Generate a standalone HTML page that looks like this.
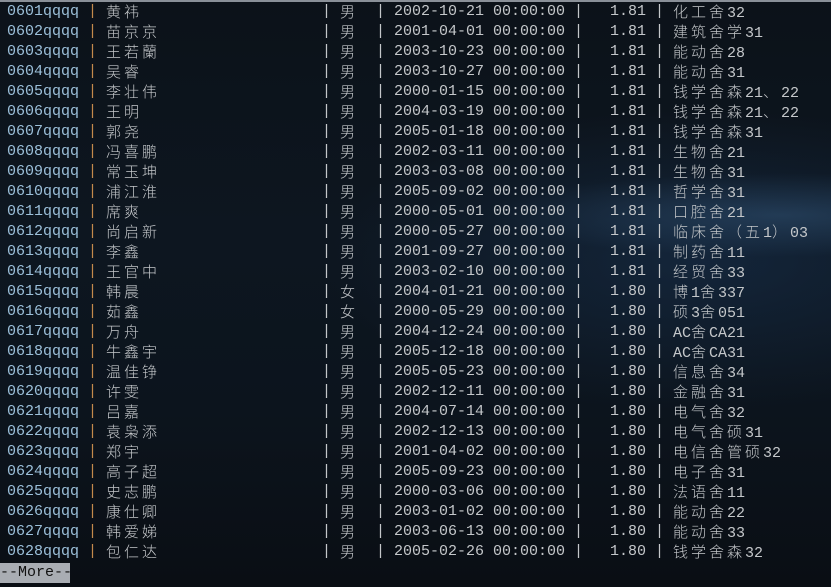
<!DOCTYPE html>
<html><head><meta charset="utf-8"><style>
html,body{margin:0;padding:0}
body{width:831px;height:587px;overflow:hidden;position:relative;
background:
radial-gradient(ellipse 420px 60px at 780px 215px,rgba(60,100,140,.4),rgba(0,0,0,0) 70%),
radial-gradient(ellipse 500px 200px at 700px 260px,rgba(25,50,80,.55),rgba(0,0,0,0) 75%),
linear-gradient(180deg,#0c1219 0%,#0d1620 40%,#0c141d 70%,#0a0e14 100%);
font-family:"Liberation Mono","Noto Sans CJK SC",monospace;font-size:15px;color:#c4c7ca}
.top{position:absolute;left:0;top:0;width:831px;height:2px;background:#8a9098}
.r{position:absolute;left:0;height:20px;line-height:20px;width:831px;white-space:pre}
.r span{position:absolute;top:0}
.id{left:7px;color:#9cc0da}
.s1{left:88px;color:#c48a4c}
.nm{left:106px}
.s2{left:322px}.sx{left:340px}.s3{left:376px}.dt{left:394px}.s4{left:574px}.ht{left:610px}.s5{left:655px}.dm{left:673px}
i{font-style:normal;letter-spacing:3px;font-family:"Noto Sans CJK SC",sans-serif;font-weight:300}
.more{position:absolute;left:0;top:563px;width:70px;height:20px;line-height:20px;background:#a9adb3;color:#111;white-space:pre}
</style></head><body>
<div class="top"></div>
<div class="r" style="top:2px"><span class="id">0601qqqq</span><span class="s1">|</span><span class="nm"><i>黄祎</i></span><span class="s2">|</span><span class="sx"><i>男</i></span><span class="s3">|</span><span class="dt">2002-10-21 00:00:00</span><span class="s4">|</span><span class="ht">1.81</span><span class="s5">|</span><span class="dm"><i>化工舍</i>32</span></div>
<div class="r" style="top:22px"><span class="id">0602qqqq</span><span class="s1">|</span><span class="nm"><i>苗京京</i></span><span class="s2">|</span><span class="sx"><i>男</i></span><span class="s3">|</span><span class="dt">2001-04-01 00:00:00</span><span class="s4">|</span><span class="ht">1.81</span><span class="s5">|</span><span class="dm"><i>建筑舍学</i>31</span></div>
<div class="r" style="top:42px"><span class="id">0603qqqq</span><span class="s1">|</span><span class="nm"><i>王若蘭</i></span><span class="s2">|</span><span class="sx"><i>男</i></span><span class="s3">|</span><span class="dt">2003-10-23 00:00:00</span><span class="s4">|</span><span class="ht">1.81</span><span class="s5">|</span><span class="dm"><i>能动舍</i>28</span></div>
<div class="r" style="top:62px"><span class="id">0604qqqq</span><span class="s1">|</span><span class="nm"><i>吴睿</i></span><span class="s2">|</span><span class="sx"><i>男</i></span><span class="s3">|</span><span class="dt">2003-10-27 00:00:00</span><span class="s4">|</span><span class="ht">1.81</span><span class="s5">|</span><span class="dm"><i>能动舍</i>31</span></div>
<div class="r" style="top:82px"><span class="id">0605qqqq</span><span class="s1">|</span><span class="nm"><i>李壮伟</i></span><span class="s2">|</span><span class="sx"><i>男</i></span><span class="s3">|</span><span class="dt">2000-01-15 00:00:00</span><span class="s4">|</span><span class="ht">1.81</span><span class="s5">|</span><span class="dm"><i>钱学舍森</i>21<i>、</i>22</span></div>
<div class="r" style="top:102px"><span class="id">0606qqqq</span><span class="s1">|</span><span class="nm"><i>王明</i></span><span class="s2">|</span><span class="sx"><i>男</i></span><span class="s3">|</span><span class="dt">2004-03-19 00:00:00</span><span class="s4">|</span><span class="ht">1.81</span><span class="s5">|</span><span class="dm"><i>钱学舍森</i>21<i>、</i>22</span></div>
<div class="r" style="top:122px"><span class="id">0607qqqq</span><span class="s1">|</span><span class="nm"><i>郭尧</i></span><span class="s2">|</span><span class="sx"><i>男</i></span><span class="s3">|</span><span class="dt">2005-01-18 00:00:00</span><span class="s4">|</span><span class="ht">1.81</span><span class="s5">|</span><span class="dm"><i>钱学舍森</i>31</span></div>
<div class="r" style="top:142px"><span class="id">0608qqqq</span><span class="s1">|</span><span class="nm"><i>冯喜鹏</i></span><span class="s2">|</span><span class="sx"><i>男</i></span><span class="s3">|</span><span class="dt">2002-03-11 00:00:00</span><span class="s4">|</span><span class="ht">1.81</span><span class="s5">|</span><span class="dm"><i>生物舍</i>21</span></div>
<div class="r" style="top:162px"><span class="id">0609qqqq</span><span class="s1">|</span><span class="nm"><i>常玉坤</i></span><span class="s2">|</span><span class="sx"><i>男</i></span><span class="s3">|</span><span class="dt">2003-03-08 00:00:00</span><span class="s4">|</span><span class="ht">1.81</span><span class="s5">|</span><span class="dm"><i>生物舍</i>31</span></div>
<div class="r" style="top:182px"><span class="id">0610qqqq</span><span class="s1">|</span><span class="nm"><i>浦江淮</i></span><span class="s2">|</span><span class="sx"><i>男</i></span><span class="s3">|</span><span class="dt">2005-09-02 00:00:00</span><span class="s4">|</span><span class="ht">1.81</span><span class="s5">|</span><span class="dm"><i>哲学舍</i>31</span></div>
<div class="r" style="top:202px"><span class="id">0611qqqq</span><span class="s1">|</span><span class="nm"><i>席爽</i></span><span class="s2">|</span><span class="sx"><i>男</i></span><span class="s3">|</span><span class="dt">2000-05-01 00:00:00</span><span class="s4">|</span><span class="ht">1.81</span><span class="s5">|</span><span class="dm"><i>口腔舍</i>21</span></div>
<div class="r" style="top:222px"><span class="id">0612qqqq</span><span class="s1">|</span><span class="nm"><i>尚启新</i></span><span class="s2">|</span><span class="sx"><i>男</i></span><span class="s3">|</span><span class="dt">2000-05-27 00:00:00</span><span class="s4">|</span><span class="ht">1.81</span><span class="s5">|</span><span class="dm"><i>临床舍（五</i>1<i>）</i>03</span></div>
<div class="r" style="top:242px"><span class="id">0613qqqq</span><span class="s1">|</span><span class="nm"><i>李鑫</i></span><span class="s2">|</span><span class="sx"><i>男</i></span><span class="s3">|</span><span class="dt">2001-09-27 00:00:00</span><span class="s4">|</span><span class="ht">1.81</span><span class="s5">|</span><span class="dm"><i>制药舍</i>11</span></div>
<div class="r" style="top:262px"><span class="id">0614qqqq</span><span class="s1">|</span><span class="nm"><i>王官中</i></span><span class="s2">|</span><span class="sx"><i>男</i></span><span class="s3">|</span><span class="dt">2003-02-10 00:00:00</span><span class="s4">|</span><span class="ht">1.81</span><span class="s5">|</span><span class="dm"><i>经贸舍</i>33</span></div>
<div class="r" style="top:282px"><span class="id">0615qqqq</span><span class="s1">|</span><span class="nm"><i>韩晨</i></span><span class="s2">|</span><span class="sx"><i>女</i></span><span class="s3">|</span><span class="dt">2004-01-21 00:00:00</span><span class="s4">|</span><span class="ht">1.80</span><span class="s5">|</span><span class="dm"><i>博</i>1<i>舍</i>337</span></div>
<div class="r" style="top:302px"><span class="id">0616qqqq</span><span class="s1">|</span><span class="nm"><i>茹鑫</i></span><span class="s2">|</span><span class="sx"><i>女</i></span><span class="s3">|</span><span class="dt">2000-05-29 00:00:00</span><span class="s4">|</span><span class="ht">1.80</span><span class="s5">|</span><span class="dm"><i>硕</i>3<i>舍</i>051</span></div>
<div class="r" style="top:322px"><span class="id">0617qqqq</span><span class="s1">|</span><span class="nm"><i>万舟</i></span><span class="s2">|</span><span class="sx"><i>男</i></span><span class="s3">|</span><span class="dt">2004-12-24 00:00:00</span><span class="s4">|</span><span class="ht">1.80</span><span class="s5">|</span><span class="dm">AC<i>舍</i>CA21</span></div>
<div class="r" style="top:342px"><span class="id">0618qqqq</span><span class="s1">|</span><span class="nm"><i>牛鑫宇</i></span><span class="s2">|</span><span class="sx"><i>男</i></span><span class="s3">|</span><span class="dt">2005-12-18 00:00:00</span><span class="s4">|</span><span class="ht">1.80</span><span class="s5">|</span><span class="dm">AC<i>舍</i>CA31</span></div>
<div class="r" style="top:362px"><span class="id">0619qqqq</span><span class="s1">|</span><span class="nm"><i>温佳铮</i></span><span class="s2">|</span><span class="sx"><i>男</i></span><span class="s3">|</span><span class="dt">2005-05-23 00:00:00</span><span class="s4">|</span><span class="ht">1.80</span><span class="s5">|</span><span class="dm"><i>信息舍</i>34</span></div>
<div class="r" style="top:382px"><span class="id">0620qqqq</span><span class="s1">|</span><span class="nm"><i>许雯</i></span><span class="s2">|</span><span class="sx"><i>男</i></span><span class="s3">|</span><span class="dt">2002-12-11 00:00:00</span><span class="s4">|</span><span class="ht">1.80</span><span class="s5">|</span><span class="dm"><i>金融舍</i>31</span></div>
<div class="r" style="top:402px"><span class="id">0621qqqq</span><span class="s1">|</span><span class="nm"><i>吕嘉</i></span><span class="s2">|</span><span class="sx"><i>男</i></span><span class="s3">|</span><span class="dt">2004-07-14 00:00:00</span><span class="s4">|</span><span class="ht">1.80</span><span class="s5">|</span><span class="dm"><i>电气舍</i>32</span></div>
<div class="r" style="top:422px"><span class="id">0622qqqq</span><span class="s1">|</span><span class="nm"><i>袁枭添</i></span><span class="s2">|</span><span class="sx"><i>男</i></span><span class="s3">|</span><span class="dt">2002-12-13 00:00:00</span><span class="s4">|</span><span class="ht">1.80</span><span class="s5">|</span><span class="dm"><i>电气舍硕</i>31</span></div>
<div class="r" style="top:442px"><span class="id">0623qqqq</span><span class="s1">|</span><span class="nm"><i>郑宇</i></span><span class="s2">|</span><span class="sx"><i>男</i></span><span class="s3">|</span><span class="dt">2001-04-02 00:00:00</span><span class="s4">|</span><span class="ht">1.80</span><span class="s5">|</span><span class="dm"><i>电信舍管硕</i>32</span></div>
<div class="r" style="top:462px"><span class="id">0624qqqq</span><span class="s1">|</span><span class="nm"><i>高子超</i></span><span class="s2">|</span><span class="sx"><i>男</i></span><span class="s3">|</span><span class="dt">2005-09-23 00:00:00</span><span class="s4">|</span><span class="ht">1.80</span><span class="s5">|</span><span class="dm"><i>电子舍</i>31</span></div>
<div class="r" style="top:482px"><span class="id">0625qqqq</span><span class="s1">|</span><span class="nm"><i>史志鹏</i></span><span class="s2">|</span><span class="sx"><i>男</i></span><span class="s3">|</span><span class="dt">2000-03-06 00:00:00</span><span class="s4">|</span><span class="ht">1.80</span><span class="s5">|</span><span class="dm"><i>法语舍</i>11</span></div>
<div class="r" style="top:502px"><span class="id">0626qqqq</span><span class="s1">|</span><span class="nm"><i>康仕卿</i></span><span class="s2">|</span><span class="sx"><i>男</i></span><span class="s3">|</span><span class="dt">2003-01-02 00:00:00</span><span class="s4">|</span><span class="ht">1.80</span><span class="s5">|</span><span class="dm"><i>能动舍</i>22</span></div>
<div class="r" style="top:522px"><span class="id">0627qqqq</span><span class="s1">|</span><span class="nm"><i>韩爱娣</i></span><span class="s2">|</span><span class="sx"><i>男</i></span><span class="s3">|</span><span class="dt">2003-06-13 00:00:00</span><span class="s4">|</span><span class="ht">1.80</span><span class="s5">|</span><span class="dm"><i>能动舍</i>33</span></div>
<div class="r" style="top:542px"><span class="id">0628qqqq</span><span class="s1">|</span><span class="nm"><i>包仁达</i></span><span class="s2">|</span><span class="sx"><i>男</i></span><span class="s3">|</span><span class="dt">2005-02-26 00:00:00</span><span class="s4">|</span><span class="ht">1.80</span><span class="s5">|</span><span class="dm"><i>钱学舍森</i>32</span></div>
<div class="more">--More--</div>
</body></html>
